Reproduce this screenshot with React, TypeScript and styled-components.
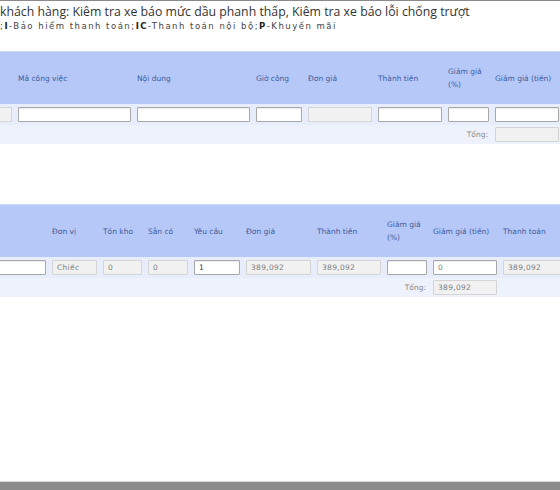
import React from "react";
import styled, { createGlobalStyle } from "styled-components";

const Global = createGlobalStyle`
  html, body { margin: 0; padding: 0; background: #ffffff; }
  body { overflow: hidden; width: 560px; height: 490px; }
  #root { width: 560px; height: 490px; }
`;

const Page = styled.div`
  width: 560px;
  height: 490px;
  display: flex;
  flex-direction: column;
  border-top: 1px solid #8a8a8a;
  box-sizing: border-box;
  overflow: hidden;
`;

const Title = styled.div`
  font-family: "Open Sans", "DejaVu Sans", sans-serif;
  font-size: 12.3px;
  color: #333333;
  line-height: 16px;
  margin-top: 3px;
  white-space: nowrap;
`;

const Legend = styled.div`
  font-family: "DejaVu Sans", sans-serif;
  font-size: 8.5px;
  letter-spacing: 1.5px;
  color: #444444;
  line-height: 12px;
  white-space: nowrap;
  b { color: #222; font-weight: bold; }
`;

const Table = styled.div<{ $cols: string; $top: number; $shift: number }>`
  margin-top: ${(p) => p.$top}px;
  margin-left: -${(p) => p.$shift}px;
  display: grid;
  grid-template-columns: ${(p) => p.$cols};
  column-gap: 6px;
  font-family: "DejaVu Sans", sans-serif;
  font-size: 7.5px;
  width: max-content;
`;

const Row = styled.div`
  display: contents;
`;

const HeadCell = styled.div`
  background: #b6c8f8;
  height: 53px;
  display: flex;
  align-items: center;
  color: #3d5c9c;
  line-height: 13px;
  border-top: 1px solid #cbd8fa;
  box-sizing: border-box;
  margin-right: -6px;
  padding-right: 6px;
`;

const BodyCell = styled.div`
  background: #e7edfb;
  height: 21px;
  display: flex;
  align-items: center;
  margin-right: -6px;
  padding-right: 6px;
`;

const TotalCell = styled.div<{ $right?: boolean }>`
  background: #eef2fc;
  height: 19px;
  display: flex;
  align-items: center;
  justify-content: ${(p) => (p.$right ? "flex-end" : "flex-start")};
  color: #777;
  margin-right: -6px;
  padding-right: 6px;
`;

const Input = styled.div<{ $disabled?: boolean; $dark?: boolean }>`
  width: 100%;
  height: 15px;
  box-sizing: border-box;
  border: 1px solid ${(p) => (p.$disabled ? "#d4d4d4" : "#a8a8a8")};
  background: ${(p) => (p.$disabled ? "#f1f1f1" : "#ffffff")};
  border-radius: 1px;
  padding-left: 4px;
  display: flex;
  align-items: center;
  color: ${(p) => (p.$dark ? "#333" : "#808080")};
  font-size: 7.5px;
  letter-spacing: 0.3px;
  box-shadow: ${(p) => (p.$disabled ? "none" : "inset 0 1px 1px rgba(0,0,0,0.08)")};
`;

const TotalLabel = styled.span`
  color: #888;
  font-size: 7.5px;
  padding-right: 1px;
`;

const Spacer = styled.div`
  flex: 1;
`;

const BottomBar = styled.div`
  height: 8px;
  background: #8c8c8c;
  border-top: 1px solid #d8d8d8;
`;

type Col = { label: string; value?: string; disabled?: boolean; dark?: boolean };

function Grid({
  cols,
  widths,
  top,
  shift,
  totalLabelIndex,
  totalValue,
}: {
  cols: Col[];
  widths: number[];
  top: number;
  shift: number;
  totalLabelIndex: number;
  totalValue: string;
}) {
  return (
    <Table $cols={widths.map((w) => `${w}px`).join(" ")} $top={top} $shift={shift}>
      <Row>
        {cols.map((c, i) => (
          <HeadCell key={"h" + i}>{c.label}</HeadCell>
        ))}
      </Row>
      <Row>
        {cols.map((c, i) => (
          <BodyCell key={"b" + i}>
            <Input $disabled={c.disabled} $dark={c.dark}>
              {c.value}
            </Input>
          </BodyCell>
        ))}
      </Row>
      <Row>
        {cols.map((c, i) => (
          <TotalCell key={"t" + i} $right={i === totalLabelIndex}>
            {i === totalLabelIndex && <TotalLabel>Tổng:</TotalLabel>}
            {i === totalLabelIndex + 1 && <Input $disabled>{totalValue}</Input>}
          </TotalCell>
        ))}
      </Row>
    </Table>
  );
}

export default function App() {
  const t1: Col[] = [
    { label: "", disabled: true },
    { label: "Mã công việc" },
    { label: "Nội dung" },
    { label: "Giờ công" },
    { label: "Đơn giá", disabled: true },
    { label: "Thành tiền" },
    { label: "Giảm giá (%)" },
    { label: "Giảm giá (tiền)" },
  ];
  const t2: Col[] = [
    { label: "" },
    { label: "Đơn vị", value: "Chiếc", disabled: true },
    { label: "Tồn kho", value: "0", disabled: true },
    { label: "Sẵn có", value: "0", disabled: true },
    { label: "Yêu cầu", value: "1", dark: true },
    { label: "Đơn giá", value: "389,092", disabled: true },
    { label: "Thành tiền", value: "389,092", disabled: true },
    { label: "Giảm giá (%)" },
    { label: "Giảm giá (tiền)", value: "0" },
    { label: "Thanh toán", value: "389,092", disabled: true },
  ];
  return (
    <>
      <Global />
      <Page>
        <Title>khách hàng: Kiêm tra xe báo mức dầu phanh thấp, Kiêm tra xe báo lỗi chống trượt</Title>
        <Legend>
          ;<b>I</b>-Bảo hiểm thanh toán;<b>IC</b>-Thanh toán nội bộ;<b>P</b>-Khuyến mãi
        </Legend>
        <Grid
          cols={t1}
          widths={[112, 113, 113, 46, 64, 64, 41, 64]}
          top={19}
          shift={100}
          totalLabelIndex={6}
          totalValue=""
        />
        <Grid
          cols={t2}
          widths={[146, 45, 39, 40, 46, 65, 64, 40, 64, 64]}
          top={60}
          shift={100}
          totalLabelIndex={7}
          totalValue="389,092"
        />
        <Spacer />
        <BottomBar />
      </Page>
    </>
  );
}
